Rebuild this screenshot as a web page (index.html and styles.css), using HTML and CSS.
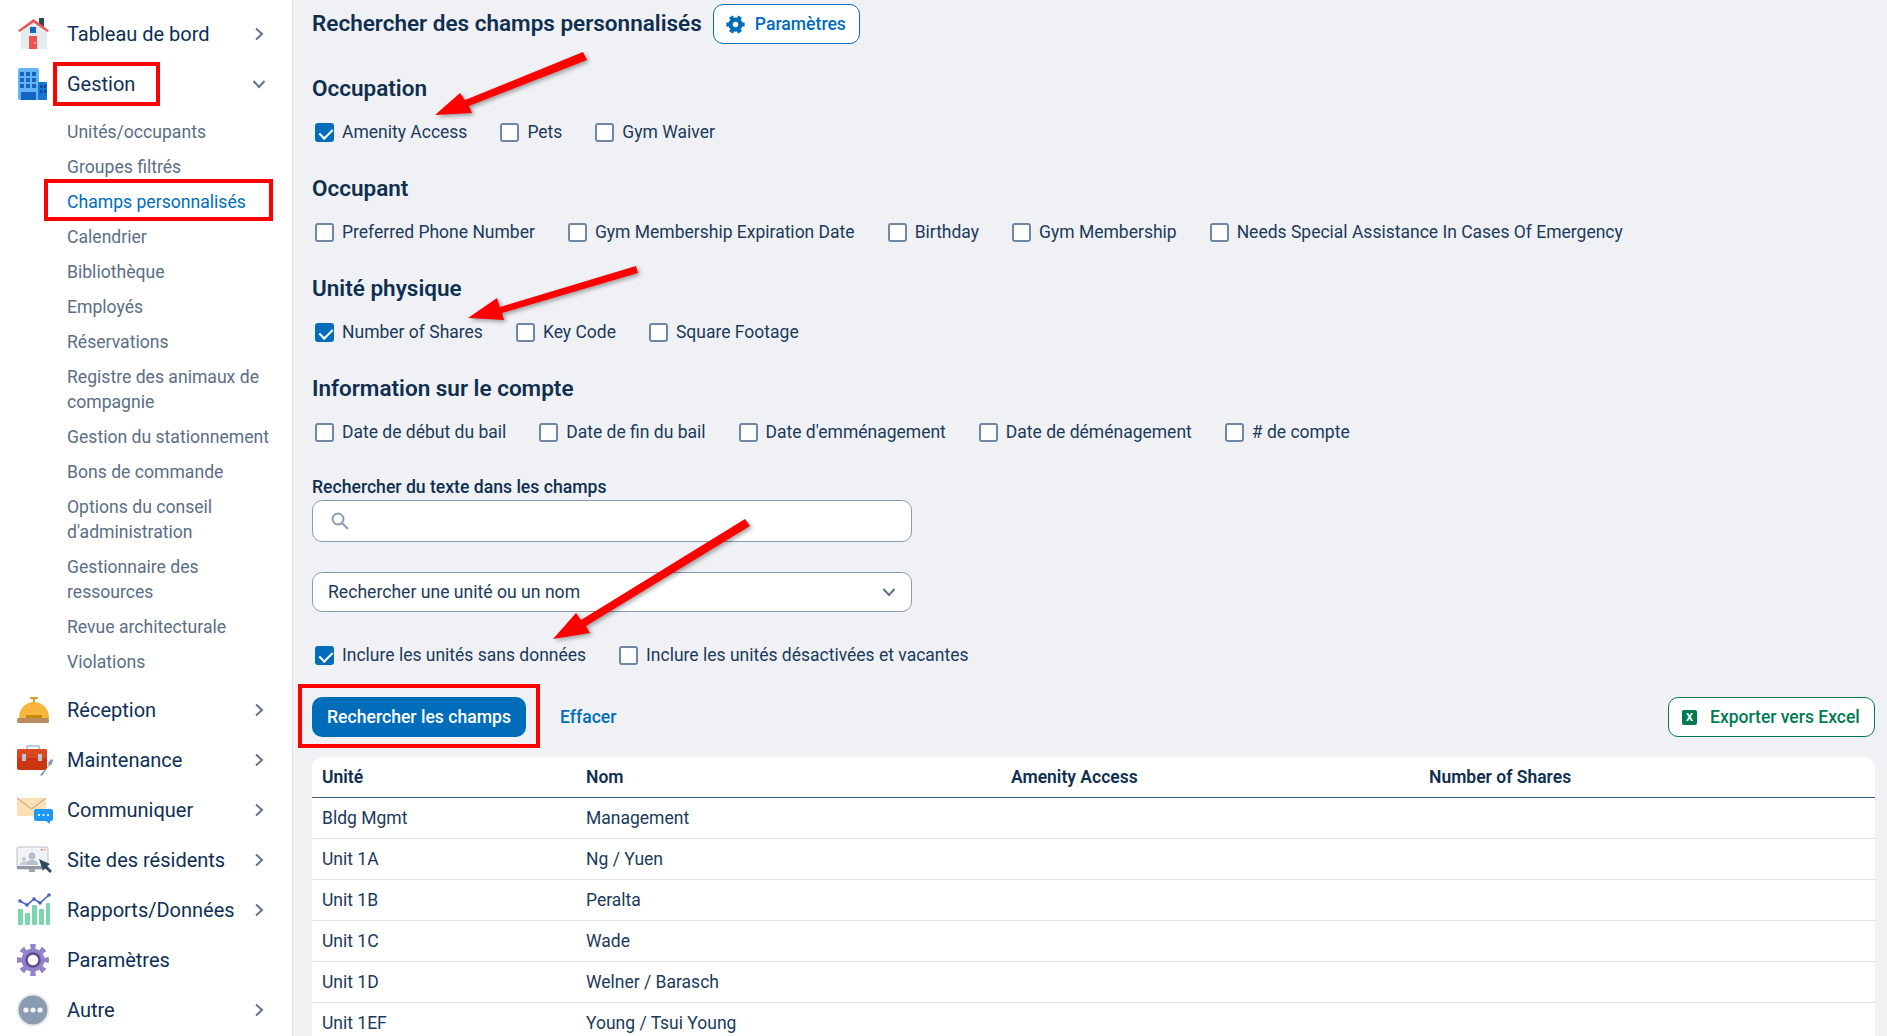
FILE: index.html
```html
<!DOCTYPE html>
<html lang="fr">
<head>
<meta charset="utf-8">
<title>Rechercher des champs personnalisés</title>
<link rel="stylesheet" href="styles.css">
</head>
<body>
<div class="app">
  <nav class="sidebar">
    <a class="nav-item">
      <svg class="nav-icon" viewBox="0 0 36 36"><rect x="23" y="2" width="5" height="9" fill="#37474f"/><path d="M5 13 18 4l13 9v20H5z" fill="#e5eaef"/><path d="M2 14.500 17.500 3 33 14.500l-1.500 1.500L17.500 6.500 3.500 16z" fill="#ef5350"/><rect x="14" y="11" width="6" height="6" fill="#1565c0"/><rect x="13" y="20" width="8" height="13" fill="#ef5350"/><circle cx="19" cy="27" r=".8" fill="#fff"/></svg>
      <span class="nav-label">Tableau de bord</span>
      <svg class="chev" viewBox="0 0 10 14"><path d="M2 1.500 8 7l-6 5.500"/></svg>
    </a>
    <a class="nav-item">
      <svg class="nav-icon" viewBox="0 0 36 36"><rect x="2" y="2" width="21" height="32" rx="2" fill="#64b5f6"/><rect x="22" y="16" width="9" height="18" rx="1" fill="#1976d2"/><g class="win"><rect x="4" y="6" width="4" height="4"/><rect x="10" y="6" width="4" height="4"/><rect x="16" y="6" width="4" height="4"/><rect x="4" y="12" width="4" height="4"/><rect x="10" y="12" width="4" height="4"/><rect x="16" y="12" width="4" height="4"/><rect x="4" y="18" width="4" height="4"/><rect x="10" y="18" width="4" height="4"/><rect x="16" y="18" width="4" height="4"/><rect x="5" y="26" width="15" height="8"/></g><g fill="#0d47a1"><rect x="24" y="19" width="2.500" height="3"/><rect x="28" y="19" width="2.500" height="3"/><rect x="24" y="24" width="2.500" height="3"/><rect x="28" y="24" width="2.500" height="3"/></g></svg>
      <span class="nav-label">Gestion</span>
      <svg class="chev chev-down" viewBox="0 0 14 10"><path d="M1.500 2 7 8l5.500-6"/></svg>
    </a>
    <ul class="sub-list">
      <li>Unités/occupants</li>
      <li>Groupes filtrés</li>
      <li class="active">Champs personnalisés</li>
      <li>Calendrier</li>
      <li>Bibliothèque</li>
      <li>Employés</li>
      <li>Réservations</li>
      <li>Registre des animaux de compagnie</li>
      <li>Gestion du stationnement</li>
      <li>Bons de commande</li>
      <li>Options du conseil d'administration</li>
      <li>Gestionnaire des ressources</li>
      <li>Revue architecturale</li>
      <li>Violations</li>
    </ul>
    <a class="nav-item">
      <svg class="nav-icon" viewBox="0 0 36 36"><rect x="14" y="5" width="8" height="2" rx="1" fill="#d99a1c"/><rect x="17" y="6" width="2" height="5" fill="#d99a1c"/><path d="M3 26C3 16 10 10 18 10s15 6 15 16z" fill="#f6b73c"/><rect x="10" y="23" width="16" height="3" fill="#c98a10"/><rect x="1" y="26" width="32" height="5" rx="1.500" fill="#b98c60"/></svg>
      <span class="nav-label">Réception</span>
      <svg class="chev" viewBox="0 0 10 14"><path d="M2 1.500 8 7l-6 5.500"/></svg>
    </a>
    <a class="nav-item">
      <svg class="nav-icon" viewBox="0 0 36 36"><path d="M11 8V4h12v4" fill="none" stroke="#a9bdd0" stroke-width="1.500"/><rect x="1" y="7" width="30" height="21" rx="2" fill="#cb3510"/><rect x="1" y="7" width="30" height="9" rx="2" fill="#d9481f"/><rect x="6" y="12" width="4" height="7" fill="#b9c6d3"/><rect x="22" y="12" width="4" height="7" fill="#b9c6d3"/><path d="M24 33l9-10-1-2 3-4 2 1-1 4-4 3-6 9z" fill="#7f9db8"/></svg>
      <span class="nav-label">Maintenance</span>
      <svg class="chev" viewBox="0 0 10 14"><path d="M2 1.500 8 7l-6 5.500"/></svg>
    </a>
    <a class="nav-item">
      <svg class="nav-icon" viewBox="0 0 38 36"><rect x="2" y="6" width="29" height="18" rx="1.500" fill="#fbe0b5"/><path d="M2 6l14.500 11L31 6" fill="none" stroke="#b79a72" stroke-width="1"/><path d="M21 17h15a2 2 0 0 1 2 2v8a2 2 0 0 1-2 2h-1v3l-4-3H21a2 2 0 0 1-2-2v-8a2 2 0 0 1 2-2z" fill="#1e96f3"/><circle cx="24" cy="23" r="1.100" fill="#fff"/><circle cx="28.500" cy="23" r="1.100" fill="#fff"/><circle cx="33" cy="23" r="1.100" fill="#fff"/></svg>
      <span class="nav-label">Communiquer</span>
      <svg class="chev" viewBox="0 0 10 14"><path d="M2 1.500 8 7l-6 5.500"/></svg>
    </a>
    <a class="nav-item">
      <svg class="nav-icon" viewBox="0 0 36 36"><rect x="1" y="5" width="31" height="22" rx="1.500" fill="#f1f3f6" stroke="#b7c0c9"/><rect x="1" y="24" width="31" height="3" fill="#8f9aa5"/><rect x="13" y="27" width="6" height="3" fill="#9aa5b0"/><circle cx="16" cy="14" r="3.500" fill="#b4bfca"/><path d="M10 23c0-4 3-5 6-5s6 1 6 5z" fill="#b4bfca"/><circle cx="8" cy="17" r="2" fill="#c4cdd6"/><path d="M4 23c0-3 2-3.500 4-3.500s4 .5 4 3.500z" fill="#c4cdd6"/><path d="M23 17l4 12 2-3 5 5 2-2-5-5 3-2z" fill="#34495e"/><rect x="25" y="7" width="2" height="1.500" fill="#e57373"/><rect x="28" y="7" width="2" height="1.500" fill="#ffb74d"/></svg>
      <span class="nav-label">Site des résidents</span>
      <svg class="chev" viewBox="0 0 10 14"><path d="M2 1.500 8 7l-6 5.500"/></svg>
    </a>
    <a class="nav-item">
      <svg class="nav-icon" viewBox="0 0 36 36"><g fill="#7bd7b0"><rect x="2" y="17" width="5" height="16" rx="1"/><rect x="9" y="21" width="5" height="12" rx="1"/><rect x="16" y="13" width="5" height="20" rx="1"/><rect x="23" y="17" width="5" height="16" rx="1"/><rect x="30" y="11" width="4" height="22" rx="1"/></g><path d="M4 9l7 4 7-6 6 4 9-8" fill="none" stroke="#4a5fc1" stroke-width="1.600"/><g fill="#4a5fc1"><circle cx="4" cy="9" r="1.800"/><circle cx="11" cy="13" r="1.800"/><circle cx="18" cy="7" r="1.800"/><circle cx="24" cy="11" r="1.800"/><circle cx="33" cy="3" r="1.800"/></g></svg>
      <span class="nav-label">Rapports/Données</span>
      <svg class="chev" viewBox="0 0 10 14"><path d="M2 1.500 8 7l-6 5.500"/></svg>
    </a>
    <a class="nav-item">
      <svg class="nav-icon" viewBox="0 0 36 36"><circle cx="17" cy="18" r="11.500" fill="#9182c9"/><circle cx="17" cy="18" r="13.500" fill="none" stroke="#9182c9" stroke-width="5" pathLength="80" stroke-dasharray="5 5" stroke-dashoffset="2.500"/><circle cx="17" cy="18" r="6.500" fill="#fff" stroke="#5d4e94" stroke-width="2.500"/></svg>
      <span class="nav-label">Paramètres</span>
    </a>
    <a class="nav-item">
      <svg class="nav-icon" viewBox="0 0 36 36"><circle cx="17" cy="18" r="15.500" fill="#8c9cb0" stroke="#e8ecf0" stroke-width="2"/><circle cx="10" cy="18" r="2.600" fill="#f0f3f6"/><circle cx="17" cy="18" r="2.600" fill="#f0f3f6"/><circle cx="24" cy="18" r="2.600" fill="#f0f3f6"/></svg>
      <span class="nav-label">Autre</span>
      <svg class="chev" viewBox="0 0 10 14"><path d="M2 1.500 8 7l-6 5.500"/></svg>
    </a>
  </nav>

  <main class="main">
    <header class="title-row">
      <h1 class="title">Rechercher des champs personnalisés</h1>
      <button class="btn btn-outline">
        <svg class="btn-gear" viewBox="0 0 20 20"><circle cx="10" cy="10" r="5.200" fill="none" stroke="#006dba" stroke-width="4.600"/><circle cx="10" cy="10" r="8" fill="none" stroke="#006dba" stroke-width="3.400" pathLength="48" stroke-dasharray="4 4" stroke-dashoffset="2"/></svg>
        Paramètres
      </button>
    </header>

    <section class="group">
      <h2 class="group-title">Occupation</h2>
      <div class="checks">
        <label class="check"><span class="box on"></span>Amenity Access</label>
        <label class="check"><span class="box"></span>Pets</label>
        <label class="check"><span class="box"></span>Gym Waiver</label>
      </div>
    </section>
    <section class="group">
      <h2 class="group-title">Occupant</h2>
      <div class="checks">
        <label class="check"><span class="box"></span>Preferred Phone Number</label>
        <label class="check"><span class="box"></span>Gym Membership Expiration Date</label>
        <label class="check"><span class="box"></span>Birthday</label>
        <label class="check"><span class="box"></span>Gym Membership</label>
        <label class="check"><span class="box"></span>Needs Special Assistance In Cases Of Emergency</label>
      </div>
    </section>
    <section class="group">
      <h2 class="group-title">Unité physique</h2>
      <div class="checks">
        <label class="check"><span class="box on"></span>Number of Shares</label>
        <label class="check"><span class="box"></span>Key Code</label>
        <label class="check"><span class="box"></span>Square Footage</label>
      </div>
    </section>
    <section class="group">
      <h2 class="group-title">Information sur le compte</h2>
      <div class="checks">
        <label class="check"><span class="box"></span>Date de début du bail</label>
        <label class="check"><span class="box"></span>Date de fin du bail</label>
        <label class="check"><span class="box"></span>Date d'emménagement</label>
        <label class="check"><span class="box"></span>Date de déménagement</label>
        <label class="check"><span class="box"></span># de compte</label>
      </div>
    </section>

    <div class="field-label">Rechercher du texte dans les champs</div>
    <div class="input">
      <svg class="search-icon" viewBox="0 0 20 20"><circle cx="8" cy="8" r="5.500"/><path d="M12 12l6 6"/></svg>
    </div>
    <div class="select">
      <span>Rechercher une unité ou un nom</span>
      <svg class="chev chev-down select-chev" viewBox="0 0 14 10"><path d="M1.500 2 7 8l5.500-6"/></svg>
    </div>
    <div class="checks checks-include">
      <label class="check"><span class="box on"></span>Inclure les unités sans données</label>
      <label class="check"><span class="box"></span>Inclure les unités désactivées et vacantes</label>
    </div>

    <div class="actions">
      <button class="btn btn-primary">Rechercher les champs</button>
      <a class="link">Effacer</a>
      <button class="btn btn-excel"><span class="xl">X</span>Exporter vers Excel</button>
    </div>

    <table class="results">
      <colgroup><col class="c1"><col class="c2"><col class="c3"><col></colgroup>
      <thead>
        <tr><th>Unité</th><th>Nom</th><th>Amenity Access</th><th>Number of Shares</th></tr>
      </thead>
      <tbody>
        <tr><td>Bldg Mgmt</td><td>Management</td><td></td><td></td></tr>
        <tr><td>Unit 1A</td><td>Ng / Yuen</td><td></td><td></td></tr>
        <tr><td>Unit 1B</td><td>Peralta</td><td></td><td></td></tr>
        <tr><td>Unit 1C</td><td>Wade</td><td></td><td></td></tr>
        <tr><td>Unit 1D</td><td>Welner / Barasch</td><td></td><td></td></tr>
        <tr><td>Unit 1EF</td><td>Young / Tsui Young</td><td></td><td></td></tr>
      </tbody>
    </table>
  </main>
</div>

<div class="mark mark-gestion"></div>
<div class="mark mark-champs"></div>
<div class="mark mark-search"></div>
<svg class="arrows" viewBox="0 0 1887 1036">
  <g class="arrow-group">
    <path d="M583 52 587 60 469 106 472 113 435 115 460 93 465 100z"/>
    <path d="M636 266 638 273 502 313 504 320 468 318 497 298 500 307z"/>
    <path d="M745 519 750 526 586 626 590 633 553 639 576 613 581 620z"/>
  </g>
</svg>
</body>
</html>
```
FILE: styles.css
```css
* { box-sizing: border-box; }
html, body { margin: 0; height: 100%; overflow: hidden; }
body {
  font-family: Roboto, "Liberation Sans", sans-serif;
  font-size: 18px;
  color: #0f2f50;
  background: #f0f1f5;
}
.app { display: flex; height: 1036px; overflow: hidden; }

/* sidebar */
.sidebar {
  flex: 0 0 293px;
  background: #fff;
  border-right: 1px solid #dfe3ea;
  padding-top: 9px;
}
.nav-item {
  display: flex;
  align-items: center;
  height: 50px;
  padding-left: 15px;
  color: #0d2f55;
  font-size: 20px;
}
.nav-icon { flex: 0 0 38px; width: 38px; height: 36px; margin-right: 14px; }
.nav-label { flex: 1; }
.win rect { fill: #1565c0; }
.chev {
  width: 10px;
  height: 14px;
  margin-right: 28px;
  fill: none;
  stroke: #5f7389;
  stroke-width: 2;
}
.chev-down { width: 14px; height: 10px; margin-right: 26px; }
.sub-list {
  list-style: none;
  margin: 0;
  padding: 6px 20px 5px 67px;
  font-size: 17.600px;
  line-height: 25px;
  color: #5a6e85;
}
.sub-list li { padding: 5px 0; }
.sub-list .active { color: #006dba; }

/* main */
.main { flex: 1; min-width: 0; padding: 4px 12px 0 19px; }
.title-row { display: flex; align-items: center; gap: 11px; height: 40px; margin-bottom: 30px; }
.title { margin: -2px 0 0; font-size: 22.500px; font-weight: 600; color: #0f2f50; }
.btn {
  display: inline-flex;
  align-items: center;
  height: 40px;
  border-radius: 10px;
  font: 500 17.600px Roboto, "Liberation Sans", sans-serif;
  padding: 0 14px;
  background: #fff;
}
.btn-outline { border: 1px solid #006dba; color: #006dba; padding: 0 13px 0 12px; }
.btn-gear { width: 19px; height: 19px; margin-right: 10px; }
.group { margin-bottom: 30px; }
.group-title { margin: 0 0 18px; font-size: 22.500px; line-height: 28px; font-weight: 600; color: #0f2f50; }
.checks { display: flex; gap: 33px; height: 24px; padding-left: 3px; }
.check { display: flex; align-items: center; font-size: 17.500px; line-height: 24px; color: #1b3a5b; white-space: nowrap; }
.box {
  position: relative;
  width: 19px;
  height: 19px;
  margin-right: 8px;
  border: 2px solid #6f87a3;
  border-radius: 3px;
  background: #fff;
}
.box.on { background: #006dba; border-color: #006dba; }
.box.on::after {
  content: "";
  position: absolute;
  left: 4.500px;
  top: 1px;
  width: 6px;
  height: 11px;
  border: solid #fff;
  border-width: 0 2px 2px 0;
  transform: rotate(45deg);
}
.group:nth-of-type(4) { margin-bottom: 32px; }
.field-label { height: 24px; font-size: 17.600px; font-weight: 500; line-height: 23px; color: #0f2f50; }
.input, .select {
  display: flex;
  align-items: center;
  width: 600px;
  background: #fff;
  border: 1px solid #8a9cb1;
  border-radius: 10px;
}
.input { height: 42px; padding-left: 17px; margin-bottom: 30px; }
.select { height: 40px; padding-left: 15px; font-size: 17.600px; color: #1b3a5b; justify-content: space-between; margin-bottom: 31px; }
.select-chev { margin-right: 15px; }
.search-icon { width: 20px; height: 20px; fill: none; stroke: #8a9cb1; stroke-width: 2; }
.checks-include { margin-bottom: 30px; }
.actions { display: flex; align-items: center; height: 40px; margin-bottom: 20px; }
.btn-primary { width: 214px; justify-content: center; background: #006dba; color: #fff; border: 0; padding: 0; }
.link { margin-left: 34px; color: #006dba; font-size: 17.600px; font-weight: 500; }
.btn-excel { margin-left: auto; width: 207px; border: 1px solid #007a53; color: #007a53; padding: 0 0 0 13px; font-size: 17.500px; }
.xl {
  display: inline-block;
  width: 15px;
  height: 15px;
  margin-right: 13px;
  border-radius: 2px;
  background: #007a53;
  color: #fff;
  font-size: 11px;
  font-weight: 700;
  line-height: 15px;
  text-align: center;
}
.results {
  width: 100%;
  border-collapse: separate;
  border-spacing: 0;
  table-layout: fixed;
  background: #fff;
  border-radius: 10px 10px 0 0;
  font-size: 17.500px;
}
.c1 { width: 264px; }
.c2 { width: 425px; }
.c3 { width: 418px; }
.results th {
  height: 41px;
  padding: 0 10px;
  text-align: left;
  font-weight: 600;
  color: #0f2f50;
  border-bottom: 1px solid #3b5a7d;
}
.results td {
  height: 41px;
  padding: 0 10px;
  color: #1b3a5b;
  border-bottom: 1px solid #dcdfe5;
}

/* annotations laid over the page */
.mark { position: absolute; border: 4px solid #f00; }
.mark-gestion { left: 53px; top: 62px; width: 107px; height: 44px; }
.mark-champs { left: 44px; top: 179px; width: 229px; height: 42px; }
.mark-search { left: 298px; top: 684px; width: 242px; height: 64px; }
.arrows { position: absolute; left: 0; top: 0; width: 1887px; height: 1036px; pointer-events: none; }
.arrow-group { fill: #f00; filter: drop-shadow(2px 2px 2px rgba(0,0,0,.35)); }
```
